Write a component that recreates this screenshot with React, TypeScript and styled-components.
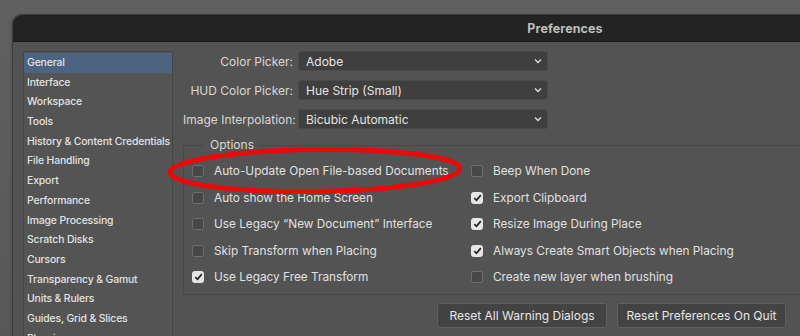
import React from "react";
import styled, { createGlobalStyle } from "styled-components";

const GlobalStyle = createGlobalStyle`
  html, body {
    margin: 0;
    padding: 0;
    background: #5b5b5b;
    overflow: hidden;
  }
  * {
    box-sizing: border-box;
  }
`;

const FONT = `Inter, "Open Sans", "Liberation Sans", sans-serif`;

const Backdrop = styled.div`
  width: 800px;
  height: 336px;
  overflow: hidden;
  padding: 15px 0 0 13px;
  background: linear-gradient(#606060, #585858);
  font-family: ${FONT};
  position: relative;
`;

const Window = styled.div`
  width: 1104px;
  height: 400px;
  background: #535353;
  border-radius: 9px 9px 0 0;
  box-shadow: 0 0 0 1px #3e3e3e, -1px 0 3px rgba(0, 0, 0, 0.25);
  overflow: hidden;
  display: flex;
  flex-direction: column;
`;

const TitleBar = styled.div`
  height: 27px;
  background: #232323;
  border-bottom: 1px solid #1a1a1a;
  display: flex;
  align-items: center;
  justify-content: center;
  color: #bdbdbd;
  font-size: 12.5px;
  font-weight: 700;
  letter-spacing: 0.1px;
`;

const Body = styled.div`
  flex: 1;
  display: flex;
  padding: 9px 0 0 10px;
  gap: 10px;
`;

const Sidebar = styled.ul`
  width: 150px;
  height: 320px;
  margin: 0;
  padding: 1px 0 0;
  list-style: none;
  border: 1px solid #454545;
  background: #545454;
`;

const SideItem = styled.li<{ $active?: boolean }>`
  height: 19.7px;
  line-height: 19.7px;
  padding-left: 3px;
  font-size: 10.4px;
  letter-spacing: -0.14px;
  font-weight: 500;
  color: #e2e2e2;
  white-space: nowrap;
  background: ${({ $active }) => ($active ? "#4c6480" : "transparent")};
`;

const Main = styled.div`
  width: 640px;
  display: flex;
  flex-direction: column;
`;

const FormGrid = styled.div`
  display: grid;
  grid-template-columns: 110px 250px;
  column-gap: 5px;
  row-gap: 9px;
  align-items: center;
`;

const Label = styled.div`
  text-align: right;
  font-size: 12px;
  color: #d8d8d8;
  white-space: nowrap;
`;

const Select = styled.div`
  height: 20px;
  border: 1px solid #4a4a4a;
  border-radius: 3px;
  background: #3f3f3f;
  display: flex;
  align-items: center;
  justify-content: space-between;
  padding: 0 5px 0 7px;
  font-size: 12px;
  color: #e4e4e4;
`;

const Options = styled.fieldset`
  margin: 9px 0 0;
  padding: 6px 0 3px 8px;
  border: 1px solid #484848;
  border-right: none;
  display: grid;
  grid-template-columns: 279px 1fr;
  grid-auto-flow: column;
  grid-template-rows: repeat(5, 26.5px);
`;

const Legend = styled.legend`
  margin-left: 13px;
  padding: 0 5px;
  font-size: 12px;
  color: #d8d8d8;
  line-height: 14px;
`;

const CheckRow = styled.div`
  display: flex;
  align-items: center;
  gap: 10px;
  font-size: 11.8px;
  color: #e0e0e0;
  white-space: nowrap;
`;

const Box = styled.span<{ $checked: boolean }>`
  width: 12px;
  height: 12px;
  border-radius: 2.5px;
  flex: none;
  display: flex;
  align-items: center;
  justify-content: center;
  background: ${({ $checked }) => ($checked ? "#e6e6e6" : "#474747")};
  border: 1px solid ${({ $checked }) => ($checked ? "#e6e6e6" : "#707070")};
`;

const ButtonRow = styled.div`
  display: flex;
  justify-content: flex-end;
  gap: 10px;
  margin-top: 8px;
  padding-right: 37px;
`;

const Button = styled.button<{ $width: number }>`
  width: ${({ $width }) => $width}px;
  height: 25px;
  padding: 0;
  border: 1px solid #5f5f5f;
  border-radius: 3px;
  background: #434343;
  color: #e6e6e6;
  font-family: ${FONT};
  font-size: 12px;
`;

const Mark = styled.svg`
  position: absolute;
  left: 160px;
  top: 140px;
  pointer-events: none;
`;

const Chevron = () => (
  <svg width="8" height="6" viewBox="0 0 8 6">
    <path d="M1 1.5 L4 4.5 L7 1.5" fill="none" stroke="#dcdcdc" strokeWidth="1.4" />
  </svg>
);

const Check = () => (
  <svg width="9" height="8" viewBox="0 0 9 8">
    <path d="M1.3 4.2 L3.5 6.3 L7.8 1.2" fill="none" stroke="#262626" strokeWidth="1.8" />
  </svg>
);

const sections = [
  "General",
  "Interface",
  "Workspace",
  "Tools",
  "History & Content Credentials",
  "File Handling",
  "Export",
  "Performance",
  "Image Processing",
  "Scratch Disks",
  "Cursors",
  "Transparency & Gamut",
  "Units & Rulers",
  "Guides, Grid & Slices",
  "Plug-ins",
  "Type",
];

const pickers = [
  { label: "Color Picker:", value: "Adobe" },
  { label: "HUD Color Picker:", value: "Hue Strip (Small)" },
  { label: "Image Interpolation:", value: "Bicubic Automatic" },
];

const options = [
  { text: "Auto-Update Open File-based Documents", checked: false },
  { text: "Auto show the Home Screen", checked: false },
  { text: "Use Legacy \u201cNew Document\u201d Interface", checked: false },
  { text: "Skip Transform when Placing", checked: false },
  { text: "Use Legacy Free Transform", checked: true },
  { text: "Beep When Done", checked: false },
  { text: "Export Clipboard", checked: true },
  { text: "Resize Image During Place", checked: true },
  { text: "Always Create Smart Objects when Placing", checked: true },
  { text: "Create new layer when brushing", checked: false },
];

export default function App() {
  return (
    <>
      <GlobalStyle />
      <Backdrop>
        <Window>
          <TitleBar>Preferences</TitleBar>
          <Body>
            <Sidebar>
              {sections.map((s, i) => (
                <SideItem key={s} $active={i === 0}>
                  {s}
                </SideItem>
              ))}
            </Sidebar>
            <Main>
              <FormGrid>
                {pickers.map((p) => (
                  <React.Fragment key={p.label}>
                    <Label>{p.label}</Label>
                    <Select>
                      {p.value}
                      <Chevron />
                    </Select>
                  </React.Fragment>
                ))}
              </FormGrid>
              <Options>
                <Legend>Options</Legend>
                {options.map((o) => (
                  <CheckRow key={o.text}>
                    <Box $checked={o.checked}>{o.checked && <Check />}</Box>
                    {o.text}
                  </CheckRow>
                ))}
              </Options>
              <ButtonRow>
                <Button $width={170}>Reset All Warning Dialogs</Button>
                <Button $width={169}>Reset Preferences On Quit</Button>
              </ButtonRow>
            </Main>
          </Body>
        </Window>
        <Mark width="310" height="60" viewBox="0 0 310 60">
          <ellipse
            cx="155"
            cy="30.5"
            rx="145"
            ry="21"
            fill="none"
            stroke="#ea0a0a"
            strokeWidth="5"
            transform="rotate(-0.8 155 30.5)"
          />
        </Mark>
      </Backdrop>
    </>
  );
}
